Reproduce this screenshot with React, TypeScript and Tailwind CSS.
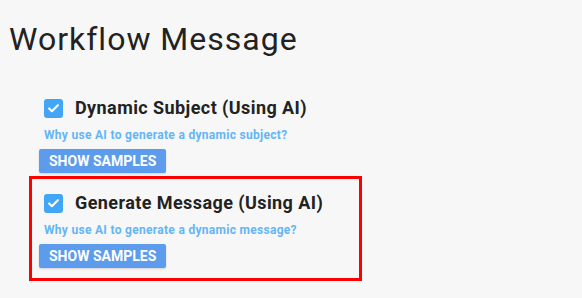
import { Check } from 'lucide-react';

interface AiOptionProps {
    label: string;
    hint: string;
    highlighted?: boolean;
}

function AiOption({ label, hint, highlighted }: AiOptionProps) {
    return (
        <div
            className={
                highlighted
                    ? 'border-[3px] border-[#ff0000] pl-[7px] pt-[14px] pb-[10px] mt-[3px]'
                    : 'border-x-[3px] border-transparent pl-[7px]'
            }
        >
            <div className="flex items-center h-[20px] ml-[5px]">
                <span className="w-[19px] h-[19px] rounded-[3px] bg-[#42a5f5] flex items-center justify-center">
                    <Check className="w-[13px] h-[13px] text-white" strokeWidth={4} />
                </span>
                <span className="ml-[12px] text-[18px] leading-[20px] font-bold tracking-[0.42px] text-[#222]">{label}</span>
            </div>
            <a className="block ml-[5px] mt-[10px] text-[12px] leading-[14px] font-bold tracking-[0.3px] text-[#64b5f6] cursor-pointer">
                {hint}
            </a>
            <button className="mt-[7px] h-[24px] px-[10px] rounded-[2px] bg-[#5d9cec] text-white text-[14px] font-bold leading-none shadow-[0_1px_2px_rgba(0,0,0,0.15)]">
                SHOW SAMPLES
            </button>
        </div>
    );
}

export default function App() {
    return (
        <div className="min-h-screen bg-[#f7f7f7] font-['Roboto',sans-serif] pl-[9px]">
            <h1 className="pt-[20px] text-[32px] leading-[38px] font-normal tracking-[1px] text-[#222]">Workflow Message</h1>

            <div className="ml-[20px] mt-[40px] w-[333px]">
                <AiOption label="Dynamic Subject (Using AI)" hint="Why use AI to generate a dynamic subject?" />
                <AiOption
                    label="Generate Message (Using AI)"
                    hint="Why use AI to generate a dynamic message?"
                    highlighted
                />
            </div>
        </div>
    );
}
